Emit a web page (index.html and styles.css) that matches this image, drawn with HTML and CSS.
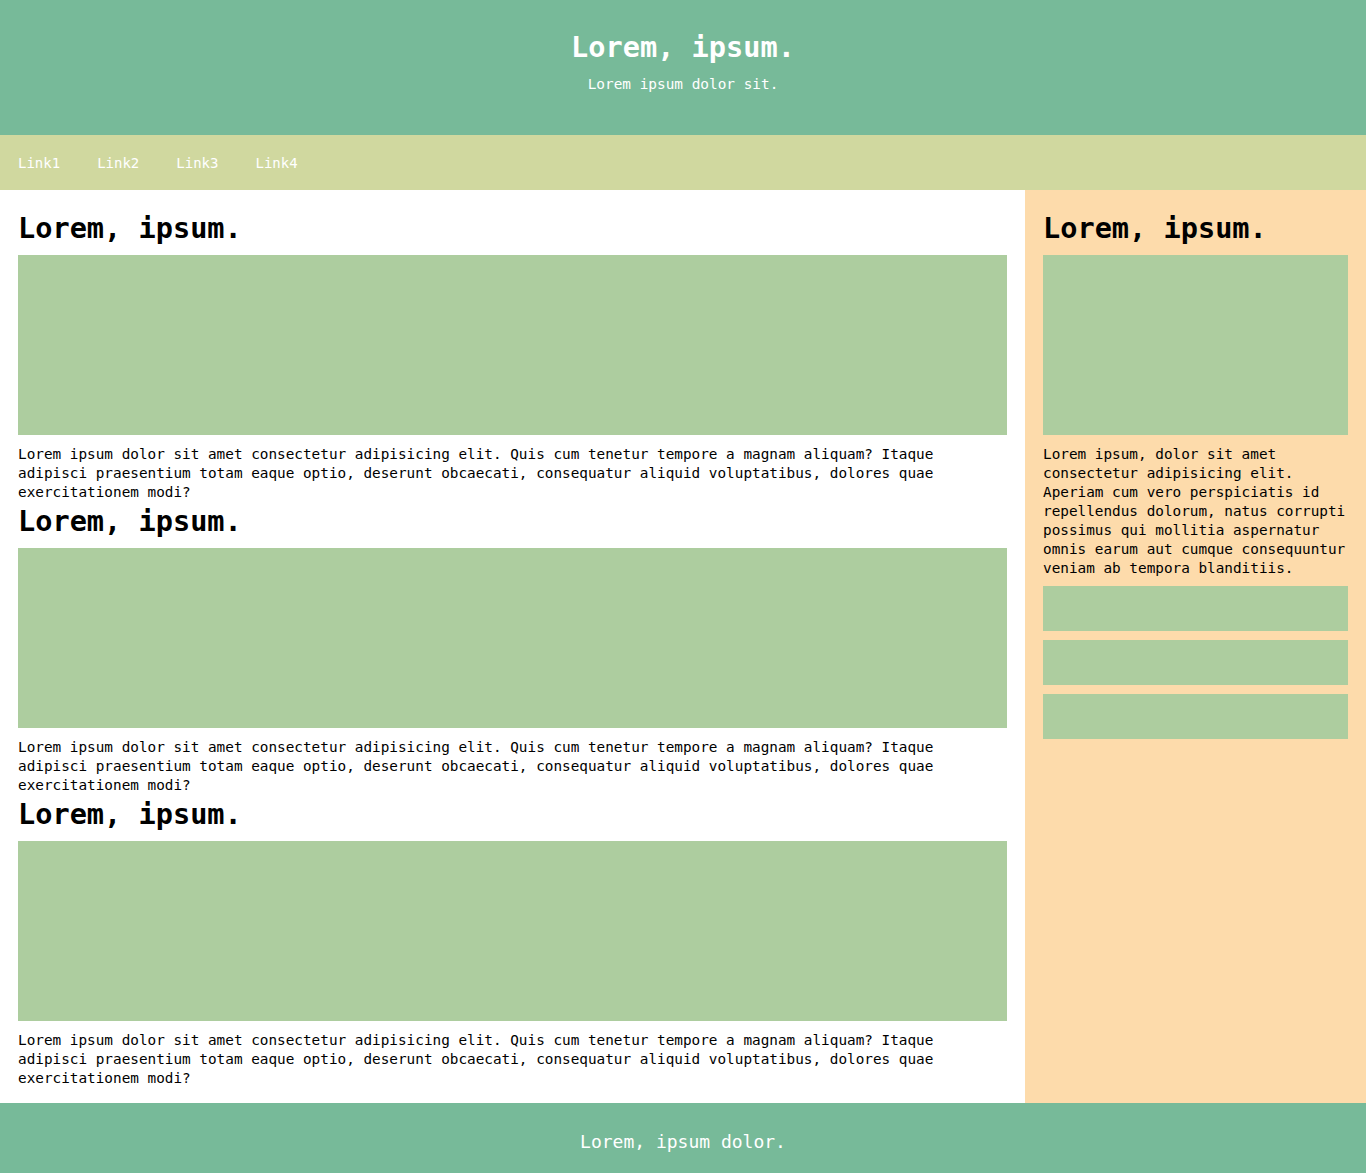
FILE: index.html
```html
<!DOCTYPE html>
<html lang="en">
<head>
<meta charset="utf-8">
<title>Lorem, ipsum.</title>
<link rel="stylesheet" href="styles.css">
</head>
<body>
<header class="site-header">
  <h1 class="site-title">Lorem, ipsum.</h1>
  <p class="site-sub">Lorem ipsum dolor sit.</p>
</header>
<nav class="site-nav">
  <a href="#">Link1</a>
  <a href="#">Link2</a>
  <a href="#">Link3</a>
  <a href="#">Link4</a>
</nav>
<div class="layout">
  <main class="main">
    <section class="article">
      <h2 class="heading">Lorem, ipsum.</h2>
      <div class="block"></div>
      <p class="text">Lorem ipsum dolor sit amet consectetur adipisicing elit. Quis cum tenetur tempore a magnam aliquam? Itaque adipisci praesentium totam eaque optio, deserunt obcaecati, consequatur aliquid voluptatibus, dolores quae exercitationem modi?</p>
    </section>
    <section class="article">
      <h2 class="heading">Lorem, ipsum.</h2>
      <div class="block"></div>
      <p class="text">Lorem ipsum dolor sit amet consectetur adipisicing elit. Quis cum tenetur tempore a magnam aliquam? Itaque adipisci praesentium totam eaque optio, deserunt obcaecati, consequatur aliquid voluptatibus, dolores quae exercitationem modi?</p>
    </section>
    <section class="article">
      <h2 class="heading">Lorem, ipsum.</h2>
      <div class="block"></div>
      <p class="text">Lorem ipsum dolor sit amet consectetur adipisicing elit. Quis cum tenetur tempore a magnam aliquam? Itaque adipisci praesentium totam eaque optio, deserunt obcaecati, consequatur aliquid voluptatibus, dolores quae exercitationem modi?</p>
    </section>
  </main>
  <aside class="sidebar">
    <h2 class="heading">Lorem, ipsum.</h2>
    <div class="block"></div>
    <p class="text side-text">Lorem ipsum, dolor sit amet consectetur adipisicing elit. Aperiam cum vero perspiciatis id repellendus dolorum, natus corrupti possimus qui mollitia aspernatur omnis earum aut cumque consequuntur veniam ab tempora blanditiis.</p>
    <div class="small-block"></div>
    <div class="small-block"></div>
    <div class="small-block"></div>
  </aside>
</div>
<footer class="site-footer">
  <p class="footer-text">Lorem, ipsum dolor.</p>
</footer>
</body>
</html>
```

FILE: styles.css
```css
* { box-sizing: border-box; }

html, body {
  margin: 0;
  padding: 0;
}

body {
  font-family: "DejaVu Sans Mono", "Liberation Mono", monospace;
  color: #000;
  background: #fff;
}

.site-header {
  background: #77ba99;
  color: #fff;
  height: 135px;
  display: flex;
  flex-direction: column;
  align-items: center;
  padding-top: 28px;
}

.site-title {
  margin: 0;
  font-size: 28.6px;
  line-height: 38px;
  font-weight: bold;
}

.site-sub {
  margin: 0;
  margin-top: 9px;
  font-size: 14.4px;
  line-height: 19px;
}

.site-nav {
  background: #d0d89f;
  height: 55px;
  display: flex;
  align-items: center;
  gap: 37px;
  padding: 2px 18px 0;
}

.site-nav a {
  color: #fff;
  text-decoration: none;
  font-size: 14px;
  line-height: 19px;
}

.layout {
  display: flex;
  align-items: stretch;
}

.main {
  width: 1025px;
  padding: 19px 18px 15px;
  background: #fff;
}

.sidebar {
  flex: 1;
  background: #fddbab;
  padding: 19px 18px 15px;
}

.heading {
  margin: 0 0 8px;
  font-size: 28.6px;
  line-height: 38px;
  font-weight: bold;
}

.block {
  height: 180px;
  background: #adcd9f;
  margin-bottom: 10px;
}

.text {
  margin: 0;
  font-size: 14.35px;
  line-height: 19px;
}

.side-text {
  margin-bottom: 8px;
}

.small-block {
  height: 45px;
  background: #adcd9f;
  margin-bottom: 9px;
}

.site-footer {
  background: #77ba99;
  height: 70px;
  display: flex;
  align-items: center;
  justify-content: center;
}

.footer-text {
  margin: 0;
  color: #fff;
  font-size: 18px;
  line-height: 24px;
  padding-top: 8px;
}
```
